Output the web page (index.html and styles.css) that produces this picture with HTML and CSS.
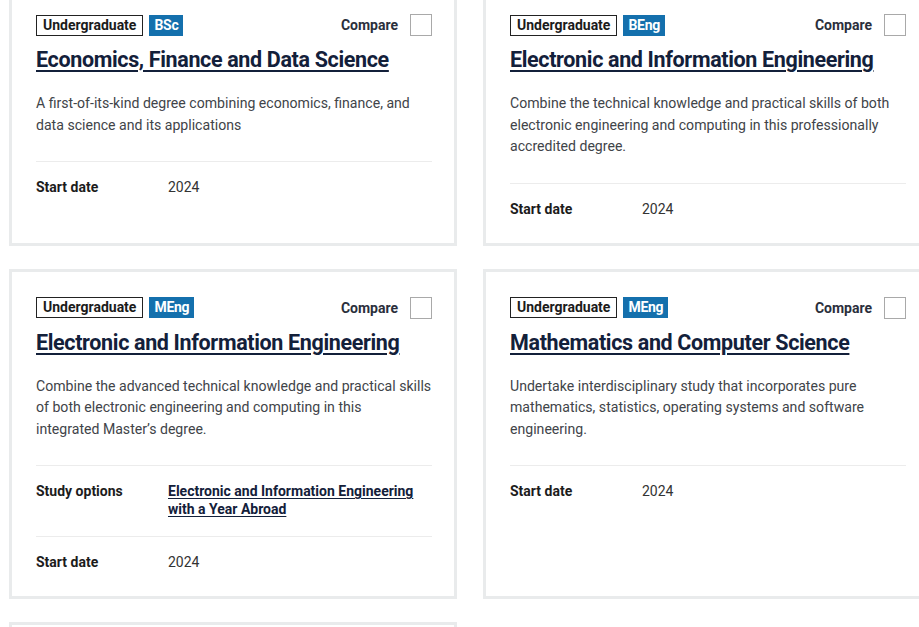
FILE: index.html
```html
<!DOCTYPE html>
<html lang="en">
<head>
<meta charset="utf-8">
<title>Courses</title>
<link rel="stylesheet" href="styles.css">
</head>
<body>
<div class="results">
  <article class="card">
    <div class="card-top">
      <div class="tags"><span class="tag tag-level">Undergraduate</span><span class="tag tag-award">BSc</span></div>
      <label class="compare">Compare<span class="checkbox"></span></label>
    </div>
    <h3 class="title"><a href="#">Economics, Finance and Data Science</a></h3>
    <p class="desc">A first-of-its-kind degree combining economics, finance, and data science and its applications</p>
    <dl class="facts">
      <div class="fact"><dt>Start date</dt><dd>2024</dd></div>
    </dl>
  </article>

  <article class="card">
    <div class="card-top">
      <div class="tags"><span class="tag tag-level">Undergraduate</span><span class="tag tag-award">BEng</span></div>
      <label class="compare">Compare<span class="checkbox"></span></label>
    </div>
    <h3 class="title"><a href="#">Electronic and Information Engineering</a></h3>
    <p class="desc">Combine the technical knowledge and practical skills of both electronic engineering and computing in this professionally accredited degree.</p>
    <dl class="facts">
      <div class="fact"><dt>Start date</dt><dd>2024</dd></div>
    </dl>
  </article>

  <article class="card">
    <div class="card-top">
      <div class="tags"><span class="tag tag-level">Undergraduate</span><span class="tag tag-award">MEng</span></div>
      <label class="compare">Compare<span class="checkbox"></span></label>
    </div>
    <h3 class="title"><a href="#">Electronic and Information Engineering</a></h3>
    <p class="desc">Combine the advanced technical knowledge and practical skills of both electronic engineering and computing in this<br>integrated Master’s degree.</p>
    <dl class="facts">
      <div class="fact"><dt>Study options</dt><dd><a class="option-link" href="#">Electronic and Information Engineering with a Year Abroad</a></dd></div>
      <div class="fact"><dt>Start date</dt><dd>2024</dd></div>
    </dl>
  </article>

  <article class="card">
    <div class="card-top">
      <div class="tags"><span class="tag tag-level">Undergraduate</span><span class="tag tag-award">MEng</span></div>
      <label class="compare">Compare<span class="checkbox"></span></label>
    </div>
    <h3 class="title"><a href="#">Mathematics and Computer Science</a></h3>
    <p class="desc">Undertake interdisciplinary study that incorporates pure mathematics, statistics, operating systems and software engineering.</p>
    <dl class="facts">
      <div class="fact"><dt>Start date</dt><dd>2024</dd></div>
    </dl>
  </article>

  <article class="card card-next"></article>
</div>
</body>
</html>
```

FILE: styles.css
```css
html, body {
  margin: 0;
  padding: 0;
  background: #ffffff;
}

body {
  font-family: Roboto, "Liberation Sans", sans-serif;
  color: #1f1f1f;
  overflow: hidden;
}

.results {
  display: grid;
  grid-template-columns: 448px 448px;
  column-gap: 26px;
  row-gap: 23px;
  margin: -14px 0 0 9px;
}

.card {
  border: 3px solid #e9ebec;
  padding: 25px 22px 7px 24px;
  background: #fff;
}

.card-next {
  height: 200px;
}

.card-top {
  display: flex;
  justify-content: space-between;
  align-items: center;
  height: 22px;
}

.tags {
  display: flex;
  gap: 6px;
}

.tag {
  font-size: 14px;
  font-weight: 700;
  line-height: 19px;
  height: 19px;
  padding: 0 6px;
}

.tag-level {
  border: 1px solid #222;
  color: #1b1b1b;
}

.tag-award {
  border: 1px solid #1470ad;
  background: #1470ad;
  color: #fff;
  padding: 0 4px;
  letter-spacing: -0.3px;
}

.compare {
  display: flex;
  align-items: center;
  gap: 12px;
  font-size: 14px;
  font-weight: 700;
  color: #2b2f3c;
}

.checkbox {
  display: block;
  width: 20px;
  height: 20px;
  border: 1px solid #a9a9a9;
  background: #fff;
}

.title {
  margin: 10px 0 0;
  font-size: 21.5px;
  letter-spacing: -0.35px;
  line-height: 28px;
  font-weight: 700;
}

.title a {
  color: #13203a;
  text-decoration: underline;
  text-decoration-thickness: 2px;
  text-underline-offset: 3px;
}

.desc {
  margin: 19px 0 25px;
  font-size: 14.1px;
  line-height: 21.5px;
  color: #414449;
}

.facts {
  margin: 0;
}

.fact {
  display: grid;
  grid-template-columns: 132px 1fr;
  border-top: 1px solid #ececec;
  padding: 16px 0 18px;
  font-size: 14px;
  line-height: 18px;
}

.fact dt {
  font-weight: 700;
  color: #1c1c1c;
}

.fact dd {
  margin: 0;
  color: #333;
}

.option-link {
  font-weight: 700;
  color: #13203a;
  text-decoration: underline;
  text-underline-offset: 2px;
  display: block;
  max-width: 250px;
}
```
